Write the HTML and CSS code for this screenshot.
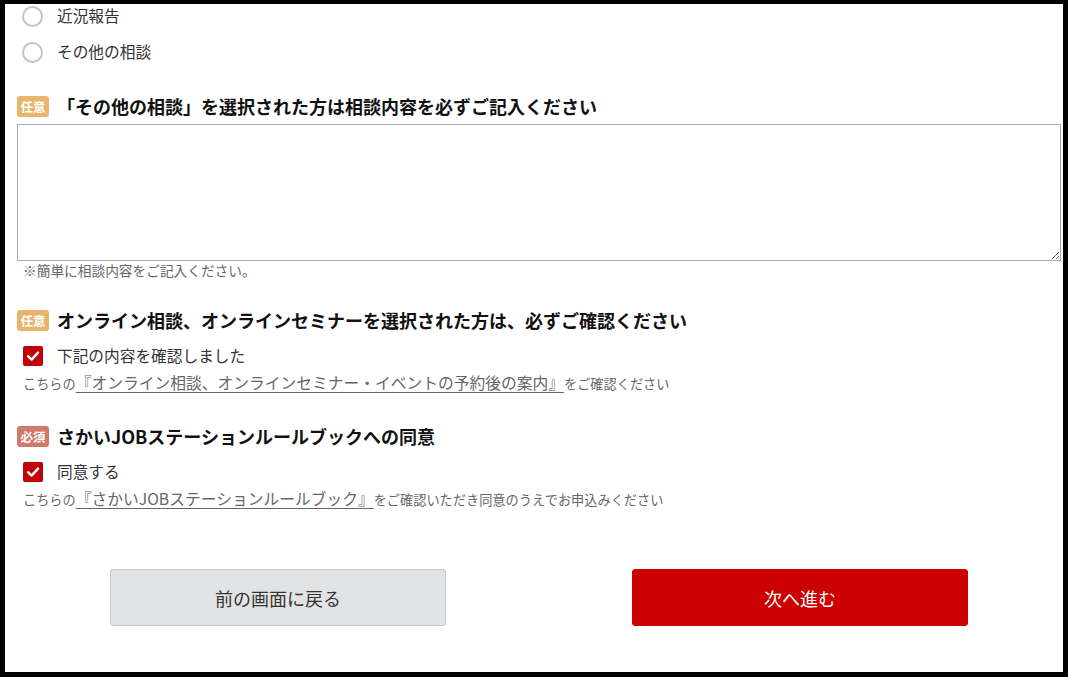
FILE: index.html
```html
<!DOCTYPE html>
<html lang="ja">
<head>
<meta charset="utf-8">
<title>フォーム</title>
<link rel="stylesheet" href="styles.css">
</head>
<body>
<div class="frame">
  <div class="content">
    <div class="radio-row"><span class="radio"></span><span class="label">近況報告</span></div>
    <div class="radio-row"><span class="radio"></span><span class="label">その他の相談</span></div>

    <div class="heading h1"><span class="badge opt">任意</span><span class="htext">「その他の相談」を選択された方は相談内容を必ずご記入ください</span></div>
    <textarea class="area"></textarea>
    <p class="note first">※簡単に相談内容をご記入ください。</p>

    <div class="heading h2"><span class="badge opt">任意</span><span class="htext">オンライン相談、オンラインセミナーを選択された方は、必ずご確認ください</span></div>
    <div class="check-row"><span class="check"><svg viewBox="0 0 20 20" width="20" height="20"><path d="M5 10.2 L8.6 13.6 L15 6.6" fill="none" stroke="#fff" stroke-width="2.4" stroke-linecap="round" stroke-linejoin="round"/></svg></span><span class="label">下記の内容を確認しました</span></div>
    <p class="note link-note">こちらの<a class="link" href="#">『オンライン相談、オンラインセミナー・イベントの予約後の案内』</a>をご確認ください</p>

    <div class="heading h3"><span class="badge req">必須</span><span class="htext">さかいJOBステーションルールブックへの同意</span></div>
    <div class="check-row"><span class="check"><svg viewBox="0 0 20 20" width="20" height="20"><path d="M5 10.2 L8.6 13.6 L15 6.6" fill="none" stroke="#fff" stroke-width="2.4" stroke-linecap="round" stroke-linejoin="round"/></svg></span><span class="label">同意する</span></div>
    <p class="note link-note">こちらの<a class="link" href="#">『さかいJOBステーションルールブック』</a>をご確認いただき同意のうえでお申込みください</p>

    <div class="buttons">
      <button class="btn back">前の画面に戻る</button>
      <button class="btn next">次へ進む</button>
    </div>
  </div>
</div>
</body>
</html>
```

FILE: styles.css
```css
* { box-sizing: border-box; }
html, body { margin: 0; padding: 0; background: #fff; }
body {
  font-family: "Noto Sans CJK JP", "Noto Sans", sans-serif;
  color: #333;
}
.frame {
  width: 1068px;
  height: 677px;
  border-style: solid;
  border-color: #000;
  border-width: 4px 5px 5px 5px;
  overflow: hidden;
  background: #fff;
}
.content {
  padding: 0 2px 0 12px;
}
.radio-row, .check-row {
  display: flex;
  align-items: center;
  height: 24px;
}
.radio-row { margin-bottom: 12px; }
.radio {
  width: 21px;
  height: 21px;
  border: 2px solid #c4c4c4;
  border-radius: 50%;
  margin-left: 5px;
  margin-right: 14px;
  flex: none;
}
.label {
  font-size: 15.7px;
  line-height: 24px;
  color: #333;
}
.heading {
  display: flex;
  align-items: center;
  height: 24px;
}
.h1 { margin-top: 30px; margin-bottom: 6px; }
.h2 { margin-top: 29px; }
.h3 { margin-top: 31px; }
.badge {
  width: 32px;
  height: 21px;
  border-radius: 3px;
  color: #fff;
  font-size: 12.5px;
  font-weight: bold;
  line-height: 21px;
  text-align: center;
  margin-right: 8px;
  flex: none;
}
.opt { background: #e9b56c; }
.req { background: #d07a6b; }
.htext {
  font-size: 18px;
  font-weight: bold;
  color: #111;
  line-height: 24px;
}
.area {
  display: block;
  width: 100%;
  height: 137px;
  border: 1px solid #aaa;
  margin: 0;
  resize: vertical;
  font-family: inherit;
}
.note {
  margin: 0;
  font-size: 13.2px;
  line-height: 18px;
  color: #666;
  padding-left: 6px;
}
.note.first { font-size: 13.7px; }
.link-note { margin-top: 6px; }
.link {
  color: #666;
  font-size: 15.75px;
  text-decoration: underline;
  text-underline-offset: 3px;
}
.check-row { margin-top: 12px; }
.check {
  width: 20px;
  height: 20px;
  background: #c2000b;
  border-radius: 2px;
  margin-left: 6px;
  margin-right: 14px;
  flex: none;
  display: flex;
}
.buttons {
  display: flex;
  justify-content: space-around;
  margin-top: 60px;
}
.btn {
  width: 336px;
  height: 57px;
  border-radius: 3px;
  font-family: inherit;
  font-size: 18px;
  cursor: pointer;
}
.back {
  background: #e2e3e5;
  border: 1px solid #c9cacc;
  color: #333;
}
.next {
  background: #cc0000;
  border: 1px solid #cc0000;
  color: #fff;
}
```
